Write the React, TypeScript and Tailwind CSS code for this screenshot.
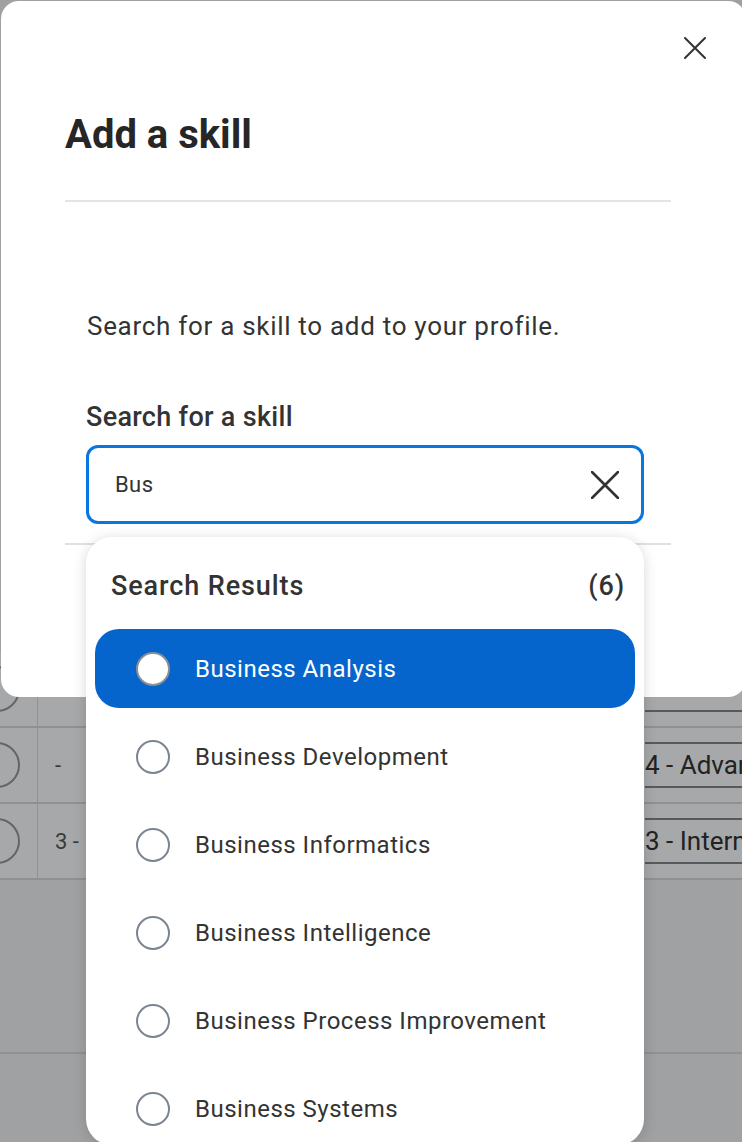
const results = [
  'Business Analysis',
  'Business Development',
  'Business Informatics',
  'Business Intelligence',
  'Business Process Improvement',
  'Business Systems',
];

const tableRows = [
  { mid: '', level: '' },
  { mid: '-', level: '4 - Advanced' },
  { mid: '3 -', level: '3 - Intermediate' },
];

function Cross({ size, stroke }: { size: number; stroke: number }) {
  return (
    <svg width={size} height={size} viewBox={`0 0 ${size} ${size}`} fill="none" stroke="currentColor" strokeWidth={stroke} strokeLinecap="round">
      <path d={`M1 1L${size - 1} ${size - 1}M${size - 1} 1L1 ${size - 1}`} />
    </svg>
  );
}

function BackgroundTable() {
  return (
    <div className="flex flex-col pt-[652px]">
      {tableRows.map((row, i) => (
        <div key={i} className="flex h-[76px] border-b-2 border-[#8f9091] bg-[#a7a8a9]">
          <div className="flex w-[38px] items-center overflow-hidden border-r border-[#919293]">
            <div className="-ml-[26px] h-[46px] w-[46px] shrink-0 rounded-full border-2 border-[#646566]" />
          </div>
          <div className="flex items-center pl-[17px] text-[22px] text-[#3a3a3a]">{row.mid}</div>
          <div className="ml-auto flex w-[97px] items-center overflow-hidden">
            <div className="flex h-[46px] w-full items-center whitespace-nowrap border-y-2 border-[#58595a] text-[26px] text-[#222]">
              {row.level}
            </div>
          </div>
        </div>
      ))}
      <div className="mt-[172px] h-[2px] bg-[#909192]" />
    </div>
  );
}

function Radio({ active }: { active: boolean }) {
  return (
    <div
      className={
        active
          ? 'h-[34px] w-[34px] shrink-0 rounded-full border-2 border-[#8a8f96] bg-white'
          : 'h-[34px] w-[34px] shrink-0 rounded-full border-2 border-[#7a8591] bg-white'
      }
    />
  );
}

export default function App() {
  return (
    <div className="relative h-[1142px] w-[742px] overflow-hidden bg-[#a0a1a2] font-[Roboto,Arial,sans-serif]">
      <BackgroundTable />

      {/* Modal */}
      <div className="absolute left-[1px] top-[1px] h-[696px] w-[745px] rounded-[18px] bg-white">
        <button className="absolute left-[683px] top-[36px] text-[#333]">
          <Cross size={22} stroke={2} />
        </button>
        <div className="pl-[63px] pr-[75px] pt-[110px]">
          <h1 className="pl-[1px] text-[40px] font-bold leading-[48px] text-[#262626]">Add a skill</h1>
          <div className="ml-[1px] mt-[41px] h-[2px] bg-[#e4e4e4]" />
          <div className="pl-[22px] pt-[108px]">
            <p className="pl-[1px] text-[26px] leading-[32px] tracking-[0.7px] text-[#333]">
              Search for a skill to add to your profile.
            </p>
            <div className="mt-[58px] text-[27px] font-medium leading-[34px] tracking-[0.3px] text-[#333]">
              Search for a skill
            </div>
            <div className="mt-[11px] flex h-[79px] w-[558px] items-center rounded-[12px] border-[3px] border-[#0875e1] pl-[26px] pr-[22px]">
              <span className="text-[22px] tracking-[0.4px] text-[#333]">Bus</span>
              <span className="ml-auto text-[#333]">
                <Cross size={28} stroke={2.6} />
              </span>
            </div>
          </div>
          <div className="ml-[1px] mt-[19px] h-[2px] bg-[#e0e0e0]" />
        </div>
      </div>

      {/* Results dropdown */}
      <div className="absolute left-[86px] top-[537px] h-[608px] w-[558px] rounded-[26px] bg-white pt-[33px] shadow-[0_2px_14px_rgba(0,0,0,0.16)]">
        <div className="flex items-center justify-between pl-[25px] pr-[19px] text-[27px] font-medium leading-[32px] tracking-[0.9px] text-[#333]">
          <span>Search Results</span>
          <span>(6)</span>
        </div>
        <div className="mt-[27px] flex flex-col gap-[9px] px-[9px]">
          {results.map((name, i) => (
            <div
              key={name}
              className={
                i === 0
                  ? 'flex h-[79px] items-center rounded-[24px] bg-[#0565cd] pl-[41px] text-white'
                  : 'flex h-[79px] items-center rounded-[24px] pl-[41px] text-[#333]'
              }
            >
              <Radio active={i === 0} />
              <span className="ml-[25px] text-[24px] tracking-[0.5px]">{name}</span>
            </div>
          ))}
        </div>
      </div>
    </div>
  );
}
